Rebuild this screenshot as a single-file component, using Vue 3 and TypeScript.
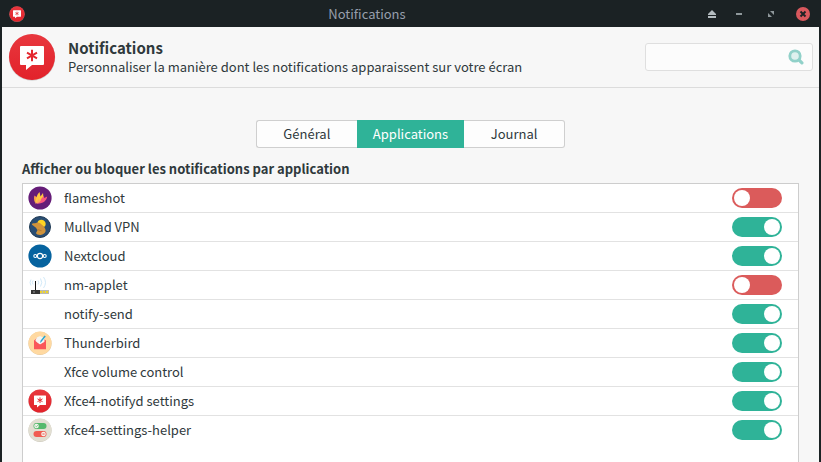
<script setup lang="ts">
import { ref } from 'vue'

type IconName = 'flameshot' | 'mullvad' | 'nextcloud' | 'network' | 'thunderbird' | 'notifyd' | 'settings' | 'none'

interface AppEntry {
  id: string
  name: string
  icon: IconName
  enabled: boolean
}

const tabs: string[] = ['Général', 'Applications', 'Journal']
const activeTab = ref<string>('Applications')
const query = ref<string>('')

const apps = ref<AppEntry[]>([
  { id: 'flameshot', name: 'flameshot', icon: 'flameshot', enabled: false },
  { id: 'mullvad', name: 'Mullvad VPN', icon: 'mullvad', enabled: true },
  { id: 'nextcloud', name: 'Nextcloud', icon: 'nextcloud', enabled: true },
  { id: 'nm-applet', name: 'nm-applet', icon: 'network', enabled: false },
  { id: 'notify-send', name: 'notify-send', icon: 'none', enabled: true },
  { id: 'thunderbird', name: 'Thunderbird', icon: 'thunderbird', enabled: true },
  { id: 'volume', name: 'Xfce volume control', icon: 'none', enabled: true },
  { id: 'notifyd', name: 'Xfce4-notifyd settings', icon: 'notifyd', enabled: true },
  { id: 'settings-helper', name: 'xfce4-settings-helper', icon: 'settings', enabled: true },
])
</script>

<template>
  <div class="window">
    <svg class="defs" width="0" height="0" aria-hidden="true">
      <defs>
        <linearGradient id="red-fill" x1="0" y1="0" x2="0" y2="1">
          <stop offset="0" stop-color="#e8373e" />
          <stop offset="1" stop-color="#e2222a" />
        </linearGradient>
        <symbol id="notification-badge" viewBox="0 0 48 48">
          <circle cx="24" cy="24.6" r="23.2" fill="#b9b9b9" opacity="0.6" />
          <circle cx="24" cy="24" r="23" fill="url(#red-fill)" />
          <path d="M13 13h22q1 0 1 1v17q0 1-1 1H24l-6 5v-5h-5q-1 0-1-1V14q0-1 1-1z" fill="#fff" />
          <path d="M24 16.8v11.4M19 19.7l10 5.6M29 19.7l-10 5.6" stroke="#e4282f" stroke-width="2" />
        </symbol>
      </defs>
    </svg>

    <header class="titlebar">
      <svg class="titlebar-icon" width="16" height="16" aria-hidden="true"><use href="#notification-badge" /></svg>
      <span class="titlebar-text">Notifications</span>
      <button class="wm-button wm-shade" type="button" aria-label="Enrouler">
        <svg width="10" height="10" viewBox="0 0 10 10">
          <path d="M5 1l4 4v1H1V5z" fill="#b4bcc0" />
          <path d="M1 7h8v2H1z" fill="#b4bcc0" />
        </svg>
      </button>
      <button class="wm-button" type="button" aria-label="Réduire">
        <svg width="10" height="10" viewBox="0 0 10 10"><path d="M2 4h6v2H2z" fill="#8f989b" /></svg>
      </button>
      <button class="wm-button" type="button" aria-label="Agrandir">
        <svg width="10" height="10" viewBox="0 0 10 10">
          <path d="M4 2h4v4zM2 4l4 4H2z" fill="#8f989b" />
        </svg>
      </button>
      <button class="wm-button" type="button" aria-label="Fermer">
        <svg width="14" height="14" viewBox="0 0 14 14">
          <circle cx="7" cy="7" r="7" fill="#d8585d" />
          <path d="M4.5 4.5l5 5M9.5 4.5l-5 5" stroke="#1b2224" stroke-width="1.9" />
        </svg>
      </button>
    </header>

    <section class="heading">
      <svg class="heading-icon" width="48" height="48" aria-hidden="true"><use href="#notification-badge" /></svg>
      <div class="heading-text">
        <h1>Notifications</h1>
        <p>Personnaliser la manière dont les notifications apparaissent sur votre écran</p>
      </div>
      <label class="search">
        <input v-model="query" type="search" aria-label="Rechercher" />
        <svg width="16" height="16" viewBox="0 0 16 16" aria-hidden="true">
          <path d="M10.5 10.5l3.4 3.4" stroke="#91d1c9" stroke-width="3.2" stroke-linecap="round" />
          <circle cx="7" cy="7" r="5.2" fill="#def1ee" stroke="#91d1c9" stroke-width="2.8" />
        </svg>
      </label>
    </section>

    <main class="content">
      <nav class="tabs" role="tablist">
        <button
          v-for="tab in tabs"
          :key="tab"
          class="tab"
          :class="{ active: tab === activeTab }"
          type="button"
          role="tab"
          :aria-selected="tab === activeTab"
          @click="activeTab = tab"
        >{{ tab }}</button>
      </nav>

      <h2>Afficher ou bloquer les notifications par application</h2>

      <ul class="app-list">
        <li v-for="app in apps" :key="app.id" class="app-row">
          <svg class="app-icon" width="24" height="24" viewBox="0 0 24 24" aria-hidden="true">
            <use v-if="app.icon === 'notifyd'" href="#notification-badge" width="24" height="24" />
            <g v-else-if="app.icon === 'flameshot'">
              <circle cx="12" cy="12" r="11.6" fill="#651c78" />
              <path d="M7 16.5C5.8 14 5.7 11.500 6.500 9.500L9 11.500l1 5z" fill="#f9a04b" />
              <path d="M7.500 17c.2-4.500 1.200-8 4-11l1 4.500L15 7l.6 5-4 4.500z" fill="#ffc83f" />
              <path d="M8.500 17.600c2.500-1 4-3 5-5l2.200-2.600.6 2 2.900-1.500c-.6 4.500-4.500 7.500-10.700 7.100z" fill="#f9587f" />
              <path d="M7 17.500c1.500-1.300 2.700-2.800 3.700-4.700l.8 1.700 1.700-1.700c-.3 3-2.700 4.900-6.200 4.700z" fill="#ffa95c" />
            </g>
            <g v-else-if="app.icon === 'mullvad'">
              <circle cx="12" cy="12" r="10.5" fill="#294d73" stroke="#203b55" />
              <path d="M9.5 7.8c.3-3.8 6.800-4.300 8 0 .6 2-.3 3.700-1.700 4.300z" fill="#ffd524" />
              <path d="M4 8.800c1-.7 2.200-.4 3.200-.6 2-.9 4-.7 5.300.2l3.300 3.200c1 1.500 1.800 2.400 1.800 4 0 2.600-2.800 4.500-5.400 4.300-2.200-.1-4-.8-4.200-2l1.500-2.600-1.500-2.600-3-2.300c-.9-.4-1.200-1-1-1.600z" fill="#d0933b" />
              <path d="M9.5 14.500l4 1.200" stroke="#a56f35" stroke-width="0.7" />
            </g>
            <g v-else-if="app.icon === 'nextcloud'">
              <circle cx="12" cy="12" r="11.6" fill="#06639f" />
              <g fill="none" stroke="#fff" stroke-width="1.1">
                <circle cx="12" cy="12" r="2.6" />
                <circle cx="7.3" cy="12" r="1.5" />
                <circle cx="16.7" cy="12" r="1.5" />
              </g>
            </g>
            <g v-else-if="app.icon === 'network'">
              <g fill="none" stroke="#c5e3f6" stroke-width="0.8">
                <path d="M10 7.500q1.500 2 0 4M12.500 5.500q2.500 4 0 8M15.500 4q4 5.500 0 11" />
                <path d="M5 7.500q-1.500 2 0 4M3 6.500q-2 3 0 6" />
              </g>
              <path d="M7.500 8v9" stroke="#151515" />
              <rect x="3" y="17" width="18" height="4" fill="#b9b9b2" />
              <rect x="3" y="17" width="9" height="4" fill="#353535" />
              <rect x="5" y="18" width="2" height="2" fill="#686868" />
              <path d="M12 18h2v2h-2zM15 18h2v2h-2zM18 18h2v2h-2z" fill="#f0d52c" />
            </g>
            <g v-else-if="app.icon === 'thunderbird'">
              <circle cx="12" cy="12.4" r="11.6" fill="#dfc59d" />
              <circle cx="12" cy="12" r="11.5" fill="#ffd9a1" />
              <path d="M6 9.500L9 7h6l3 2.500V18H6z" fill="#fa5759" />
              <path d="M7.500 10c0-2.500 2-4.800 5-4.800l4 1.800v4.500L12 14z" fill="#f5f5f3" />
              <path d="M6 10l6 3.500 6-3.500v8.300H6z" fill="#fa5759" />
              <path d="M12 12l.5-2.300L16.500 4.500l1.300 1-4.300 5.200z" fill="#2aa5cf" />
            </g>
            <g v-else-if="app.icon === 'settings'">
              <circle cx="12" cy="12.4" r="11.6" fill="#c8c5ba" />
              <circle cx="12" cy="12" r="11.5" fill="#e2dfd2" />
              <rect x="5.5" y="5" width="13" height="6" rx="3" fill="#56b96c" />
              <circle cx="8.5" cy="8" r="2.3" fill="#f4f4ed" />
              <path d="M7.4 8l.9.9 1.500-1.800" fill="none" stroke="#56b96c" stroke-width="0.7" />
              <rect x="5.5" y="13" width="13" height="6" rx="3" fill="#f15c51" />
              <circle cx="15.5" cy="16" r="2.3" fill="#f4f4ed" />
              <path d="M14.6 15.1l1.800 1.800M16.400 15.1l-1.800 1.800" stroke="#f15c51" stroke-width="0.7" />
            </g>
          </svg>
          <label class="app-name" :for="app.id">{{ app.name }}</label>
          <input :id="app.id" v-model="app.enabled" class="switch" type="checkbox" role="switch" />
        </li>
      </ul>
    </main>
  </div>
</template>

<style>
body {
  margin: 0;
  background: #1b2224;
  overflow: hidden;
}
</style>

<style scoped>
.window {
  box-sizing: border-box;
  display: flex;
  flex-direction: column;
  min-height: 100vh;
  padding: 0 2px;
  background: #1b2224;
  color: #2f393c;
  font-family: "Noto Sans CJK SC", "Noto Sans", sans-serif;
  font-size: 13px;
  line-height: 18px;
}

.defs {
  position: absolute;
}

button,
input {
  margin: 0;
  font: inherit;
  color: inherit;
}

svg {
  flex: none;
  display: block;
}

.titlebar {
  display: flex;
  align-items: center;
  height: 27px;
  color: #969fac;
}

.titlebar-icon {
  margin: 0 8px 0 7px;
}

.titlebar-text {
  flex: 1;
  text-align: center;
}

.wm-button {
  display: flex;
  align-items: center;
  justify-content: center;
  width: 32px;
  height: 27px;
  padding: 0;
  border: 0;
  background: none;
}

.wm-shade {
  width: 22px;
}

.heading {
  display: flex;
  align-items: center;
  height: 60px;
  padding: 0 6px;
  border-bottom: 1px solid #dcdcdc;
  background: #f7f7f7;
}

.heading-text {
  flex: 1;
  margin-left: 12px;
}

h1,
h2,
p {
  margin: 0;
}

h1 {
  font-size: 15px;
  font-weight: 700;
  line-height: 20px;
}

.search {
  box-sizing: border-box;
  display: flex;
  align-items: center;
  width: 168px;
  height: 28px;
  padding: 0 8px;
  border: 1px solid #dfdfdf;
  border-radius: 3px;
  background: #fcfcfc;
}

.search input {
  flex: 1;
  min-width: 0;
  padding: 0;
  border: 0;
  outline: 0;
  background: none;
  appearance: none;
}

.content {
  flex: 1;
  display: flex;
  flex-direction: column;
  padding: 32px 20px 0;
  background: #f7f7f7;
}

.tabs {
  display: flex;
  align-self: center;
}

.tab {
  box-sizing: border-box;
  min-width: 101px;
  height: 28px;
  padding: 0 15px;
  border: 1px solid #cfcfcf;
  background: #fdfdfd;
}

.tab:first-child {
  border-right: 0;
  border-radius: 3px 0 0 3px;
}

.tab:last-child {
  border-left: 0;
  border-radius: 0 3px 3px 0;
}

.tab.active {
  border-color: #2fb398;
  background: #2fb398;
  color: #fff;
}

h2 {
  margin: 12px 0 5px;
  font-size: 13px;
  font-weight: 700;
  line-height: 18px;
}

.app-list {
  flex: 1;
  margin: 0;
  padding: 0;
  border: 1px solid #cdcdcd;
  border-bottom: 0;
  background: #fff;
  list-style: none;
}

.app-row {
  display: flex;
  align-items: center;
  height: 28px;
  padding: 0 16px 0 5px;
  border-bottom: 1px solid #e2e2e2;
}

.app-name {
  flex: 1;
  margin-left: 12px;
}

.app-row:last-child {
  border-bottom: 0;
}

.switch {
  box-sizing: border-box;
  display: flex;
  width: 50px;
  height: 20px;
  padding: 2px;
  border-radius: 10px;
  background: #db5b5b;
  appearance: none;
}

.switch::before {
  content: "";
  width: 16px;
  height: 16px;
  border-radius: 50%;
  background: #fff;
}

.switch:checked {
  justify-content: flex-end;
  background: #2fb398;
}
</style>
